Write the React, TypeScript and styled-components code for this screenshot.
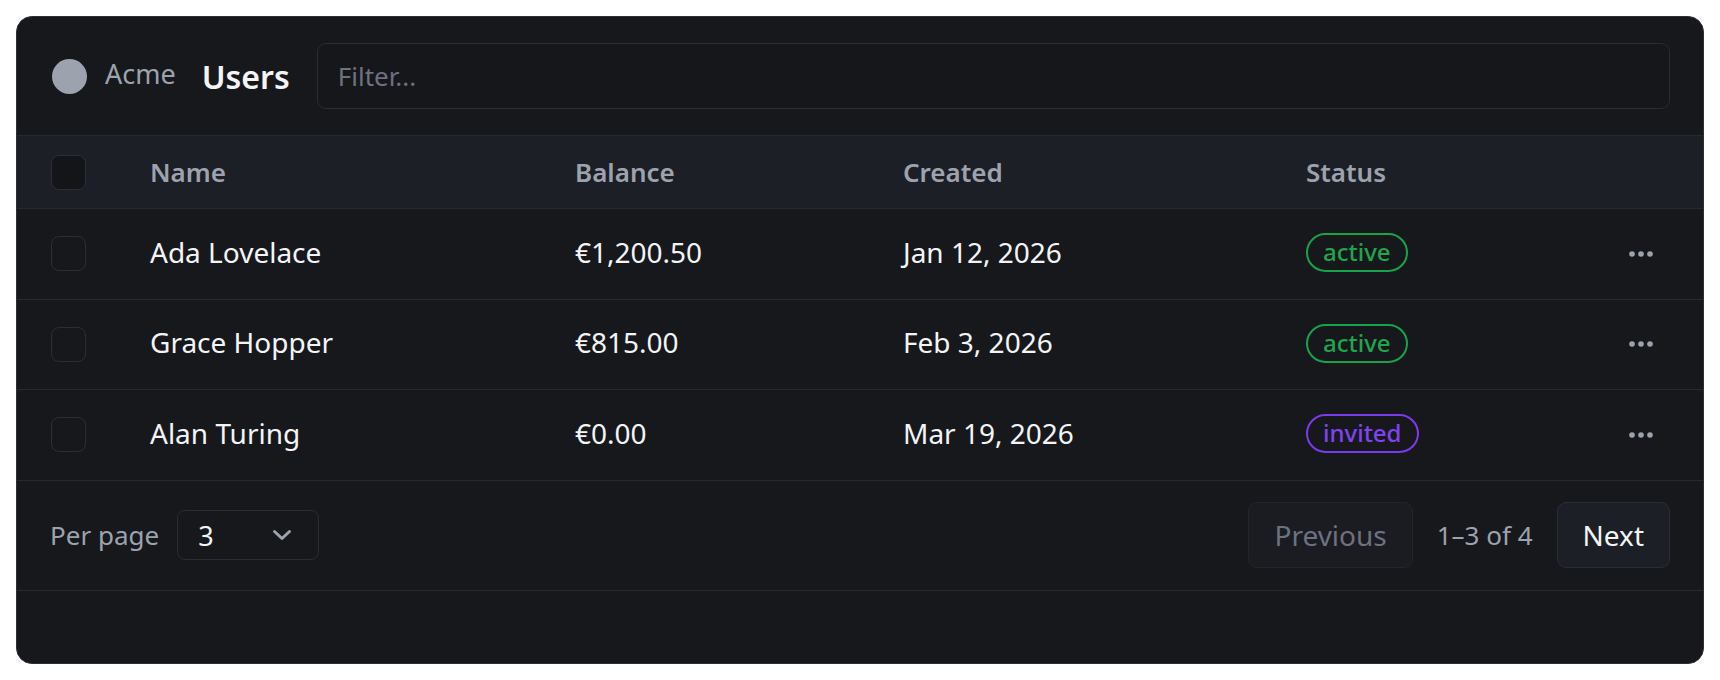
import styled, { createGlobalStyle, css } from "styled-components"

interface user {
  id: number
  name: string
  balance: string
  created: string
  status: "active" | "invited"
}

const users: user[] = [
  { id: 1, name: "Ada Lovelace", balance: "€1,200.50", created: "Jan 12, 2026", status: "active" },
  { id: 2, name: "Grace Hopper", balance: "€815.00", created: "Feb 3, 2026", status: "active" },
  { id: 3, name: "Alan Turing", balance: "€0.00", created: "Mar 19, 2026", status: "invited" },
]

const GlobalStyle = createGlobalStyle`
  * { box-sizing: border-box; }
  body {
    margin: 0;
    padding: 16px;
    background: #ffffff;
    font-family: "Noto Sans", "Open Sans", sans-serif;
  }
`

const Card = styled.div`
  height: calc(100vh - 32px);
  display: flex;
  flex-direction: column;
  background-color: #17181c;
  border: 1.5px solid #2c2f36;
  border-radius: 16px;
  overflow: hidden;
`

const Toolbar = styled.div`
  display: flex;
  align-items: center;
  padding: 26px 33px 26px 35px;
  border-bottom: 1.5px solid #262930;
`

const Avatar = styled.span`
  width: 35px;
  height: 35px;
  border-radius: 50%;
  background-color: #9ca3af;
  flex-shrink: 0;
`

const Brand = styled.span`
  margin: 0 0 5px 18px;
  font-size: 27px;
  color: #9ca3af;
`

const Title = styled.h1`
  margin: 0 0 0 26px;
  font-size: 32px;
  font-weight: 600;
  color: #f3f4f6;
`

const Filter = styled.input`
  flex: 1;
  margin-left: 27px;
  height: 66px;
  padding: 0 20px;
  background-color: #16171b;
  border: 1.5px solid #2a2d35;
  border-radius: 9px;
  font-family: inherit;
  font-size: 26px;
  color: #f3f4f6;
  outline: none;

  &::placeholder {
    color: #6b7280;
  }
`

const gridRow = css`
  display: grid;
  grid-template-columns: 99px 425px 328px 403px 1fr 54px;
  align-items: center;
  padding: 0 35px 0 34px;
`

const HeadRow = styled.div`
  ${gridRow}
  height: 73px;
  background-color: #1c1f26;
  border-bottom: 1.5px solid #262930;
`

const HeadCell = styled.span`
  font-size: 26px;
  font-weight: 600;
  color: #9ca3af;
`

const Row = styled.div`
  ${gridRow}
  height: 90.5px;
  border-bottom: 1.5px solid #262930;
`

const Cell = styled.span`
  margin-bottom: 4px;
  font-size: 28px;
  color: #f3f4f6;
`

const Checkbox = styled.span<{ $filled?: boolean }>`
  display: block;
  width: 35px;
  height: 35px;
  border-radius: 8px;
  border: 1.5px solid #2a2e36;
  background-color: ${(p) => (p.$filled ? "#141519" : "transparent")};
`

const Badge = styled.span<{ $tone: "active" | "invited" }>`
  justify-self: start;
  display: inline-flex;
  align-items: center;
  height: 39px;
  margin-bottom: 2px;
  padding: 0 15px 2px;
  border-radius: 999px;
  font-size: 24px;
  font-weight: 500;
  border: 2px solid ${(p) => (p.$tone === "active" ? "#16a34a" : "#7c3aed")};
  color: ${(p) => (p.$tone === "active" ? "#1ea64c" : "#8043f0")};
`

const MoreButton = styled.button`
  justify-self: center;
  display: flex;
  align-items: center;
  padding: 0;
  background: transparent;
  border: none;
`

const Footer = styled.div`
  display: flex;
  align-items: center;
  justify-content: space-between;
  height: 110px;
  padding: 0 33px;
  border-bottom: 1.5px solid #262930;
`

const PerPage = styled.div`
  display: flex;
  align-items: center;
  gap: 18px;
`

const Muted = styled.span`
  font-size: 26px;
  color: #9ca3af;
`

const Select = styled.div`
  display: flex;
  align-items: center;
  justify-content: space-between;
  width: 142px;
  height: 50px;
  padding: 0 26px 0 20px;
  border: 1.5px solid #2a2d35;
  border-radius: 8px;
  font-size: 27px;
  color: #f3f4f6;
`

const Pager = styled.div`
  display: flex;
  align-items: center;
  gap: 24px;
`

const PageButton = styled.button<{ $disabled?: boolean }>`
  height: 66px;
  padding: 0 25px;
  border-radius: 9px;
  font-family: inherit;
  font-size: 28px;
  background-color: ${(p) => (p.$disabled ? "#1a1c21" : "#1c1f26")};
  border: 1.5px solid ${(p) => (p.$disabled ? "#22252b" : "#2a2d35")};
  color: ${(p) => (p.$disabled ? "#6b7280" : "#f3f4f6")};
`

const Dots = () => (
  <svg width="24" height="8" viewBox="0 0 24 8">
    <circle cx="3" cy="4" r="2.8" fill="#9ca3af" />
    <circle cx="12" cy="4" r="2.8" fill="#9ca3af" />
    <circle cx="21" cy="4" r="2.8" fill="#9ca3af" />
  </svg>
)

const Chevron = () => (
  <svg width="20" height="12" viewBox="0 0 20 12" fill="none">
    <path d="M2.5 2.5 L10 9.5 L17.5 2.5" stroke="#9ca3af" strokeWidth="3" strokeLinecap="round" strokeLinejoin="round" />
  </svg>
)

const App = () => {
  return (
    <>
      <GlobalStyle />
      <Card>
        <Toolbar>
          <Avatar />
          <Brand>Acme</Brand>
          <Title>Users</Title>
          <Filter placeholder="Filter..." />
        </Toolbar>

        <HeadRow>
          <Checkbox $filled />
          <HeadCell>Name</HeadCell>
          <HeadCell>Balance</HeadCell>
          <HeadCell>Created</HeadCell>
          <HeadCell>Status</HeadCell>
          <span />
        </HeadRow>

        {users.map((u) => (
          <Row key={u.id}>
            <Checkbox />
            <Cell>{u.name}</Cell>
            <Cell>{u.balance}</Cell>
            <Cell>{u.created}</Cell>
            <Badge $tone={u.status}>{u.status}</Badge>
            <MoreButton>
              <Dots />
            </MoreButton>
          </Row>
        ))}

        <Footer>
          <PerPage>
            <Muted>Per page</Muted>
            <Select>
              <span>3</span>
              <Chevron />
            </Select>
          </PerPage>
          <Pager>
            <PageButton $disabled>Previous</PageButton>
            <Muted>1–3 of 4</Muted>
            <PageButton>Next</PageButton>
          </Pager>
        </Footer>
      </Card>
    </>
  )
}

export default App
